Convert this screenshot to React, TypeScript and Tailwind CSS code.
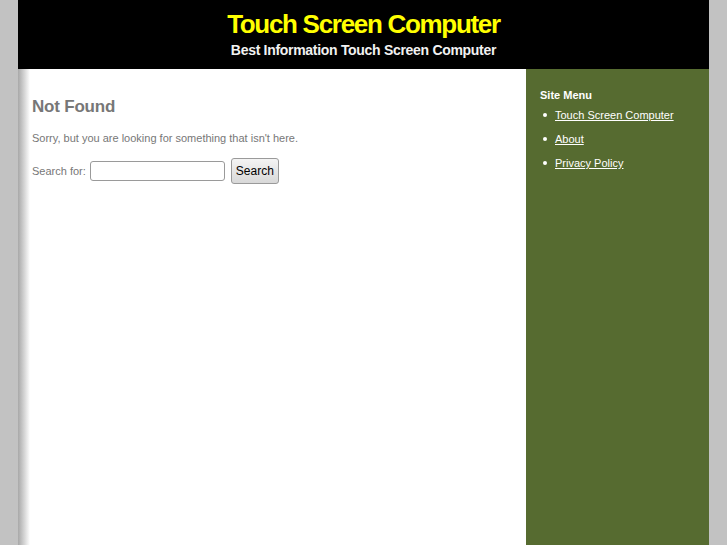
export default function App() {
  const links = ["Touch Screen Computer", "About", "Privacy Policy"];

  return (
    <div className="min-h-screen bg-[#c2c2c2] font-['Liberation_Sans',Arial,sans-serif]">
      <div className="mx-auto flex min-h-[545px] w-[691px] flex-col">
        {/* Header */}
        <header className="flex h-[69px] flex-col items-center bg-black pt-[9px]">
          <h1 className="text-[26px] font-bold leading-[30px] tracking-[-1.3px] text-[#ffff00]">
            Touch Screen Computer
          </h1>
          <p className="mt-[3px] text-[14px] font-bold leading-[16px] tracking-[-0.3px] text-[#f2f2f2]">
            Best Information Touch Screen Computer
          </p>
        </header>

        <div className="flex flex-1">
          {/* Main content */}
          <main className="relative w-[508px] bg-white pl-[14px] pt-[27px]">
            <div className="absolute inset-y-0 left-0 w-[12px] bg-gradient-to-r from-[#a8a8a8] to-white" />
            <h2 className="text-[17px] font-bold leading-[22px] tracking-[-0.2px] text-[#777777]">Not Found</h2>
            <p className="mt-[13px] text-[11px] leading-[14px] text-[#777777]">
              Sorry, but you are looking for something that isn't here.
            </p>
            <form className="mt-[13px] flex items-center" onSubmit={(e) => e.preventDefault()}>
              <label className="text-[11px] text-[#777777]">Search for:</label>
              <input
                type="text"
                className="ml-[4px] h-[20px] w-[135px] rounded-[3px] border border-[#9a9a9a] bg-white"
              />
              <button
                type="submit"
                className="ml-[6px] h-[26px] w-[48px] rounded-[3px] border border-[#9a9a9a] bg-gradient-to-b from-[#f4f4f4] to-[#d8d8d8] text-[12px] text-black"
              >
                Search
              </button>
            </form>
          </main>

          {/* Sidebar */}
          <aside className="w-[183px] bg-[#566b30] pl-[14px] pt-[19px]">
            <h3 className="text-[11px] font-bold leading-[14px] text-white">Site Menu</h3>
            <ul className="mt-[6px] flex flex-col gap-[10px]">
              {links.map((l) => (
                <li key={l} className="flex items-center text-[11px] leading-[14px] text-white">
                  <span className="ml-[3px] mr-[8px] h-[4px] w-[4px] rounded-full bg-white" />
                  <a href="#" className="underline">
                    {l}
                  </a>
                </li>
              ))}
            </ul>
          </aside>
        </div>
      </div>
    </div>
  );
}
